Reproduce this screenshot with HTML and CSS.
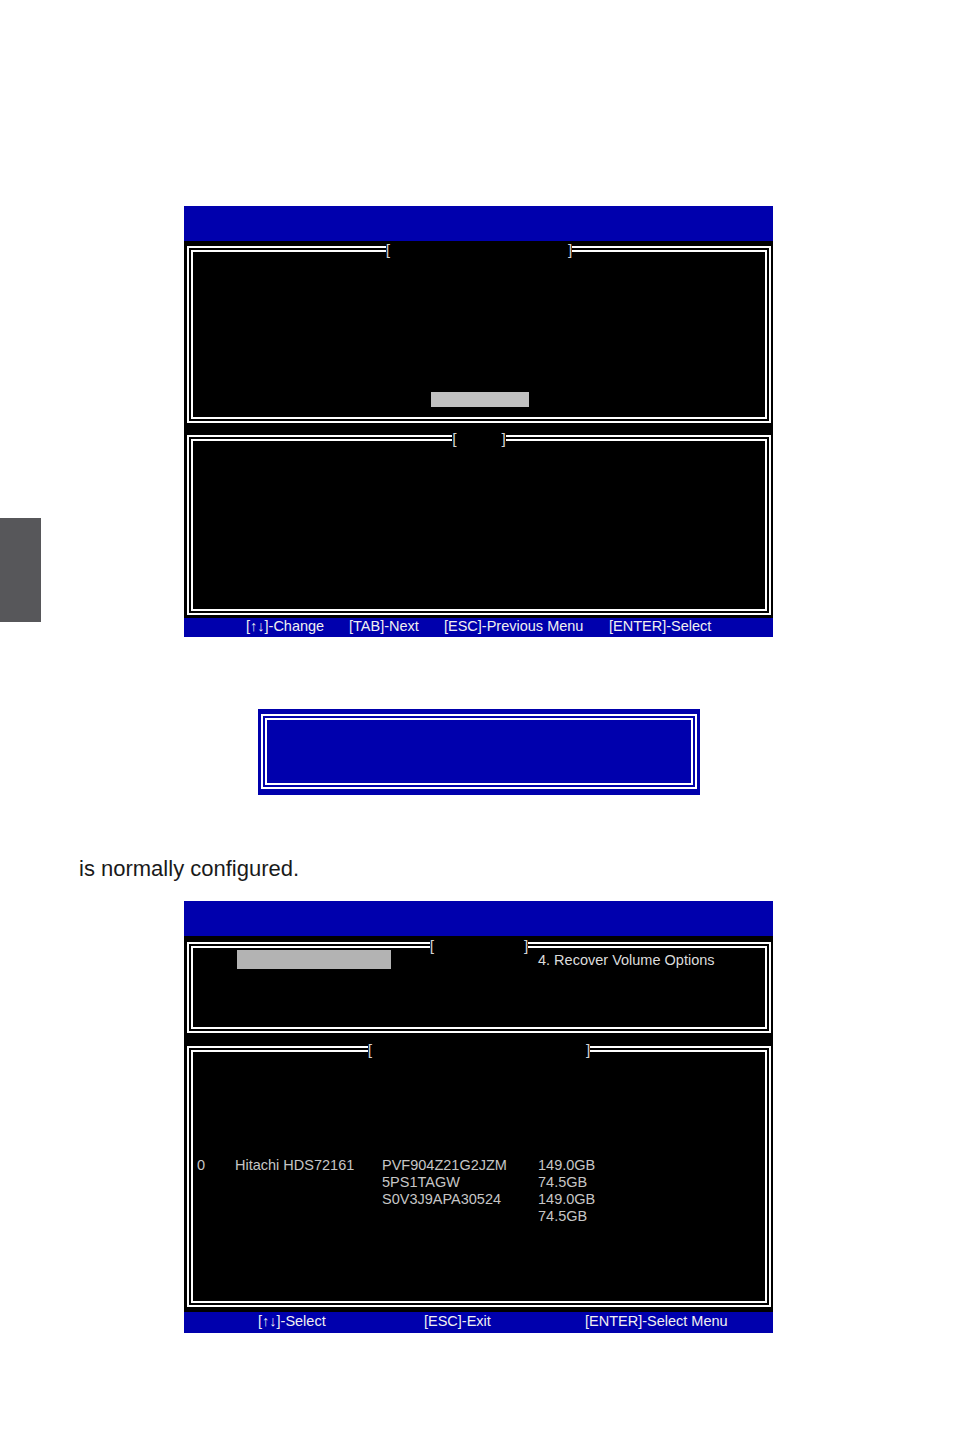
FILE: index.html
```html
<!DOCTYPE html>
<html lang="en">
<head>
<meta charset="utf-8">
<title>RAID BIOS</title>
<link rel="stylesheet" href="styles.css">
</head>
<body>
<div class="side-tab"></div>
<main class="page">
  <section class="bios bios-one">
    <div class="bios-header"></div>
    <div class="bios-body">
      <div class="frame frame-a1">
        <div class="frame-title"><span>[</span><span class="blank gap-180"></span><span>]</span></div>
        <div class="highlight highlight-a"></div>
      </div>
      <div class="frame frame-a2">
        <div class="frame-title"><span>[</span><span class="blank gap-47"></span><span>]</span></div>
      </div>
    </div>
    <div class="status status-one">
      <span class="key key-1">[↑↓]-Change</span>
      <span class="key key-2">[TAB]-Next</span>
      <span class="key key-3">[ESC]-Previous Menu</span>
      <span class="key">[ENTER]-Select</span>
    </div>
  </section>

  <div class="dialog">
    <div class="dialog-inner"></div>
  </div>

  <p class="note">is normally configured.</p>

  <section class="bios bios-two">
    <div class="bios-header"></div>
    <div class="bios-body">
      <div class="frame frame-b1">
        <div class="frame-title"><span>[</span><span class="blank gap-92"></span><span>]</span></div>
        <div class="menu-row">
          <div class="highlight highlight-b"></div>
          <span class="menu-item">4. Recover Volume Options</span>
        </div>
      </div>
      <div class="frame frame-b2">
        <div class="frame-title"><span>[</span><span class="blank gap-216"></span><span>]</span></div>
        <div class="disk-grid">
          <span>0</span><span>Hitachi HDS72161</span><span>PVF904Z21G2JZM</span><span>149.0GB</span>
          <span></span><span></span><span>5PS1TAGW</span><span>74.5GB</span>
          <span></span><span></span><span>S0V3J9APA30524</span><span>149.0GB</span>
          <span></span><span></span><span></span><span>74.5GB</span>
        </div>
      </div>
    </div>
    <div class="status status-two">
      <span class="key key-a">[↑↓]-Select</span>
      <span class="key key-b">[ESC]-Exit</span>
      <span class="key">[ENTER]-Select Menu</span>
    </div>
  </section>
</main>
</body>
</html>
```

FILE: styles.css
```css
* {
  box-sizing: border-box;
}

html,
body {
  margin: 0;
  padding: 0;
  background: #ffffff;
}

body {
  position: relative;
  width: 954px;
  min-height: 1452px;
  font-family: "Liberation Sans", Arial, sans-serif;
}

.side-tab {
  position: absolute;
  left: 0;
  top: 518px;
  width: 41px;
  height: 104px;
  background: #57575a;
}

.page {
  padding-top: 206px;
}

.bios {
  width: 589px;
  margin-left: 184px;
  background: #000000;
}

.bios-header {
  height: 35px;
  background: #0000ad;
}

.bios-body {
  padding: 5px 2px 0 3px;
}

.bios-two .bios-body {
  padding-top: 6px;
}

.frame {
  position: relative;
  border: 6px double #ffffff;
}

.frame-a1 {
  height: 177px;
}

.frame-a2 {
  height: 180px;
  margin-top: 12px;
}

.frame-b1 {
  height: 91px;
}

.frame-b2 {
  height: 261px;
  margin-top: 13px;
}

.frame-title {
  position: absolute;
  top: -10px;
  left: 0;
  right: 0;
  margin: 0 auto;
  width: max-content;
  display: flex;
  background: #000000;
  color: #d4d4d4;
  font-size: 15.5px;
  line-height: 15px;
}

.blank {
  display: block;
}

.gap-180 { width: 178px; }
.gap-47 { width: 45px; }
.gap-92 { width: 90px; }
.gap-216 { width: 214px; }

.highlight-a {
  width: 98px;
  height: 15px;
  margin: 140px 0 0 238px;
  background: #c0c0c0;
}

.menu-row {
  display: flex;
  align-items: flex-start;
}

.highlight-b {
  width: 154px;
  height: 19px;
  margin: 2px 0 0 44px;
  background: #b3b3b3;
}

.menu-item {
  margin: 4px 0 0 147px;
  color: #dcdcdc;
  font-size: 14.5px;
  line-height: 17px;
  white-space: nowrap;
}

.disk-grid {
  display: grid;
  grid-template-columns: 38px 147px 156px auto;
  padding: 105px 0 0 4px;
  color: #c6c6c6;
  font-size: 14.5px;
  line-height: 17px;
  white-space: nowrap;
}

.status {
  display: flex;
  background: #0000ad;
  color: #f0f0f0;
  font-size: 14.5px;
  white-space: nowrap;
}

.status-one {
  height: 19px;
  margin-top: 3px;
  padding-left: 62px;
  line-height: 17px;
}

.status-two {
  height: 21px;
  margin-top: 5px;
  padding-left: 74px;
  line-height: 19px;
}

.key-1 { width: 103px; }
.key-2 { width: 95px; }
.key-3 { width: 165px; }
.key-a { width: 166px; }
.key-b { width: 161px; }

.dialog {
  width: 442px;
  height: 86px;
  margin: 72px 0 0 258px;
  padding: 5px 3px 6px 3px;
  background: #0000ad;
}

.dialog-inner {
  height: 100%;
  border: 6px double #ffffff;
}

.note {
  margin: 62px 0 0 79px;
  color: #1a1a1a;
  font-size: 22px;
  line-height: 24px;
}

.bios-two {
  margin-top: 20px;
}
```
